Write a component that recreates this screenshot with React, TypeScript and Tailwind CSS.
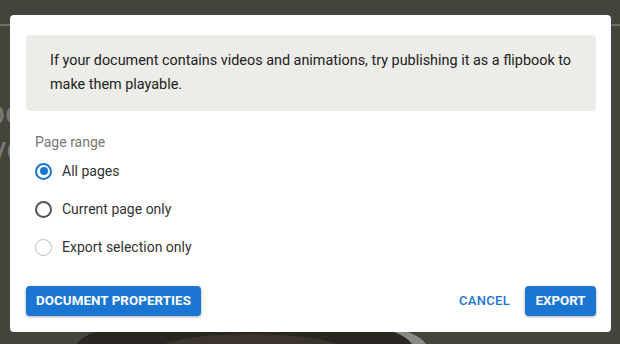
import React from "react";

function Radio({ state }: { state: "checked" | "unchecked" | "disabled" }) {
  if (state === "checked") {
    return (
      <span className="flex h-[17px] w-[17px] items-center justify-center rounded-full border-2 border-[#1a76d2]">
        <span className="h-[8px] w-[8px] rounded-full bg-[#1a76d2]" />
      </span>
    );
  }
  if (state === "unchecked") {
    return <span className="block h-[17px] w-[17px] rounded-full border-2 border-[#555555]" />;
  }
  return <span className="block h-[17px] w-[17px] rounded-full border-[1.5px] border-[#bdbdbd]" />;
}

export default function App() {
  const font = { fontFamily: "Roboto, 'Liberation Sans', sans-serif" };
  const rows: { label: string; state: "checked" | "unchecked" | "disabled" }[] = [
    { label: "All pages", state: "checked" },
    { label: "Current page only", state: "unchecked" },
    { label: "Export selection only", state: "disabled" },
  ];
  return (
    <div className="relative h-[344px] w-[620px] overflow-hidden bg-[#45443c]" style={font}>
      {/* background content */}
      <div className="absolute left-0 right-0 top-[24px] h-[2px] bg-[#6e6d66]" />
      <div className="absolute left-[-14px] top-[92px] text-[34px] leading-[40px] text-[#7c7b75]">po</div>
      <div className="absolute left-[-10px] top-[128px] text-[34px] leading-[40px] text-[#7c7b75]">ve</div>
      <div className="absolute left-[74px] top-[320px] h-[60px] w-[354px] rounded-t-[100px_30px] bg-[#8a8984]" />
      <div className="absolute left-[74px] top-[320px] h-[60px] w-[340px] rounded-t-[100px_30px] bg-[#2a2621]" />
      <div className="absolute left-[150px] top-[334px] h-[40px] w-[200px] rounded-[50%] bg-[#3a342d]" />

      {/* dialog */}
      <div className="absolute left-[10px] top-[15px] flex h-[317px] w-[601px] flex-col rounded-[4px] bg-white pl-[16px] pr-[15px] pt-[20px] pb-[16px]">
        <div className="rounded-[4px] bg-[#ecece8] px-[24px] py-[14px] text-[14.4px] leading-[24px] text-[#222222]">
          If your document contains videos and animations, try publishing it as a flipbook to make them playable.
        </div>
        <div className="mt-[21px] pl-[9px] text-[14px] leading-[20px] text-[#777777]">Page range</div>
        <div className="flex flex-col">
          {rows.map((r) => (
            <div key={r.label} className="flex h-[38px] items-center gap-[10px] pl-[9px]">
              <Radio state={r.state} />
              <span className="text-[14px] leading-[20px] text-[#333333]">{r.label}</span>
            </div>
          ))}
        </div>
        <div className="mt-auto flex items-center justify-between">
          <button className="h-[30px] rounded-[4px] bg-[#1a76d2] px-[10px] text-[13.3px] font-bold tracking-[0.1px] text-white shadow-[0_1px_3px_rgba(0,0,0,0.35)]">
            DOCUMENT PROPERTIES
          </button>
          <div className="flex items-center gap-[15px]">
            <button className="h-[30px] px-[0px] text-[13px] font-medium tracking-[0.3px] text-[#1a76d2]">CANCEL</button>
            <button className="h-[30px] w-[71px] rounded-[4px] bg-[#1a76d2] text-[13.3px] font-bold text-white shadow-[0_1px_3px_rgba(0,0,0,0.35)]">
              EXPORT
            </button>
          </div>
        </div>
      </div>
    </div>
  );
}
